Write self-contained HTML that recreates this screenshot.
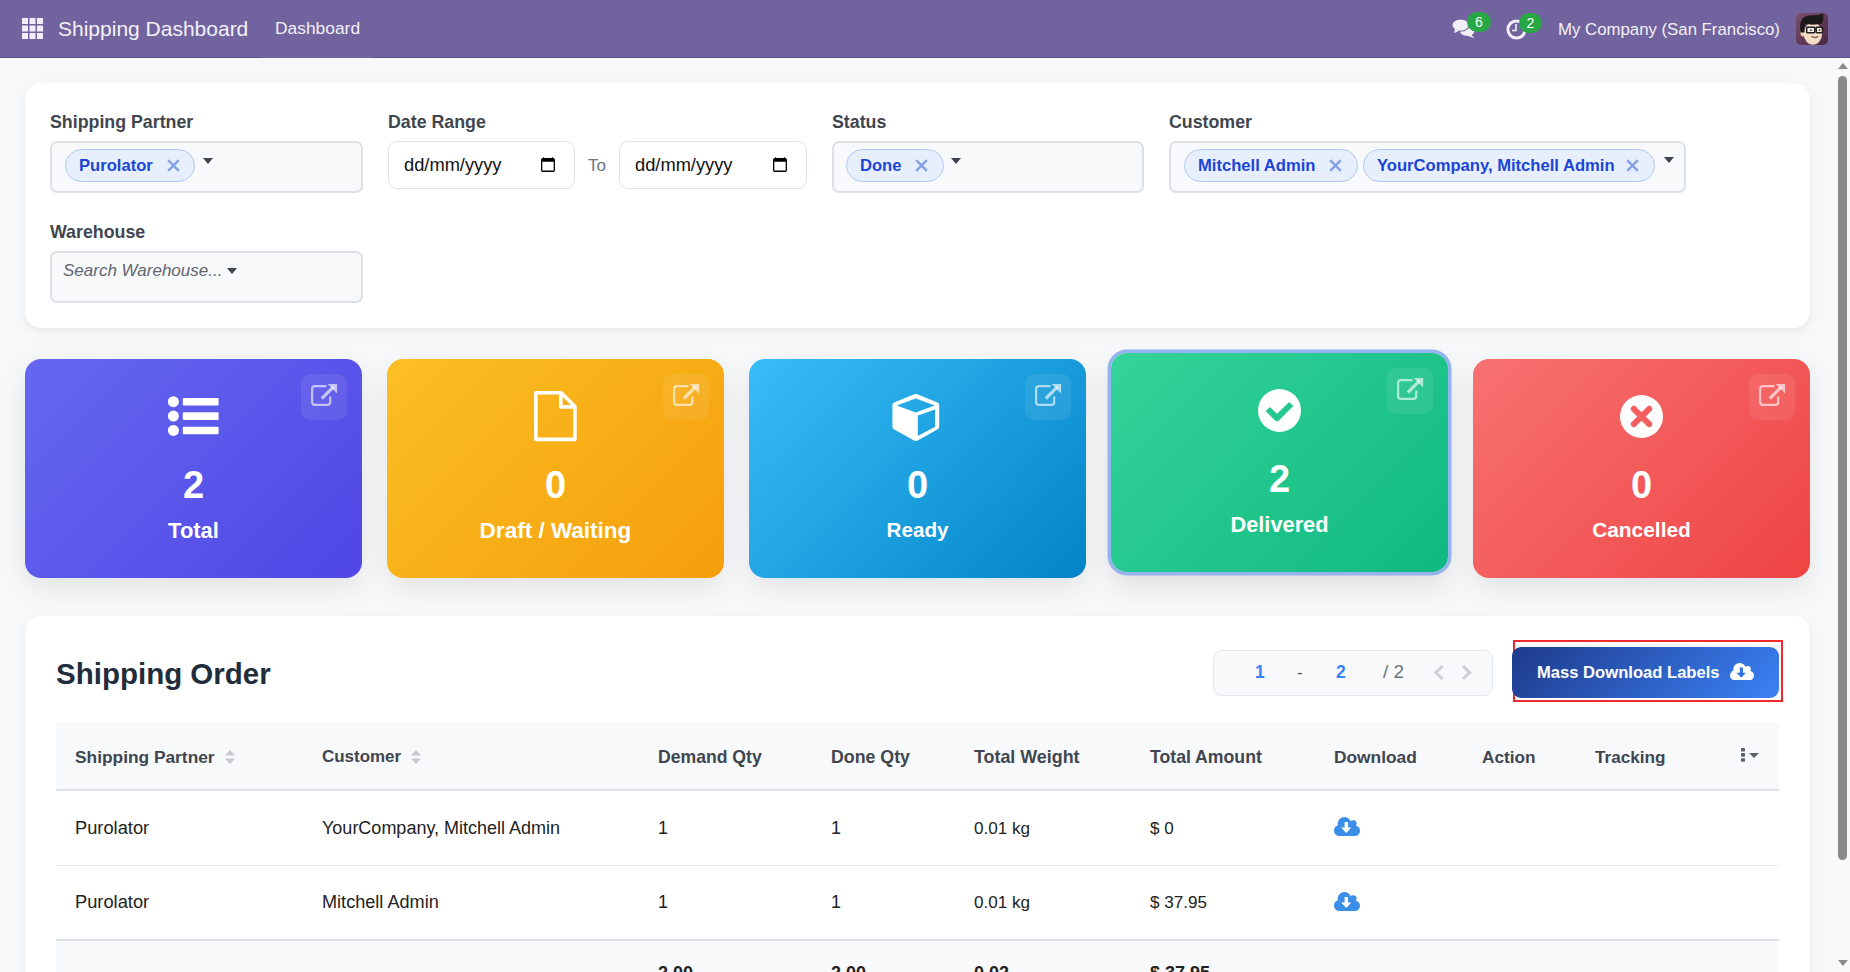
<!DOCTYPE html>
<html><head><meta charset="utf-8">
<style>
*{box-sizing:border-box;margin:0;padding:0}
html,body{width:1850px;height:972px;overflow:hidden}
body{font-family:"Liberation Sans",sans-serif;background:#f7f8fa;position:relative;color:#212529}
.abs{position:absolute}
.nav{position:absolute;left:0;top:0;width:1850px;height:58px;background:#71639e;border-bottom:1px solid #5f5289}
.nav .t{position:absolute;color:#f3f1f7;white-space:nowrap;line-height:1}
.card{position:absolute;background:#fff;border-radius:16px;box-shadow:0 2px 5px rgba(0,0,0,.045),0 4px 16px rgba(0,0,0,.04)}
.lbl{position:absolute;font-weight:700;color:#3f4650;font-size:17.8px;line-height:1;white-space:nowrap}
.sel{position:absolute;background:#f8f9fa;border:2px solid #dde1e5;border-radius:7px}
.tag{position:absolute;background:#e8effc;border:1px solid #b0c8f3;border-radius:17px;height:33px;top:149px}
.tag span{position:absolute;left:13px;top:8px;font-weight:700;color:#1c45d6;font-size:16.6px;line-height:1;white-space:nowrap}
.tag svg{position:absolute;top:10px}
.caret{position:absolute;width:0;height:0;border-left:5px solid transparent;border-right:5px solid transparent;border-top:6px solid #3d444d}
.date{position:absolute;background:#fff;border:1px solid #dde1e6;border-radius:9px;height:48px;top:141px}
.date span{position:absolute;left:15px;top:14px;font-size:18.3px;line-height:1;color:#111;white-space:nowrap}
.date svg{position:absolute;top:15px}
.stat{position:absolute;top:359px;width:337px;height:219px;border-radius:16px;color:#fff;box-shadow:0 10px 28px rgba(0,0,0,.085)}
.stat .num{position:absolute;left:0;right:0;top:107px;text-align:center;font-weight:700;font-size:38px;line-height:1}
.stat .nm{position:absolute;left:0;right:0;top:161px;text-align:center;font-weight:700;font-size:22px;line-height:1}
.stat .ico{position:absolute}
.ext{position:absolute;left:276px;top:15px;width:46px;height:46px;border-radius:9px;background:rgba(255,255,255,.08)}
.ext svg{position:absolute;left:0;top:0}
.th{position:absolute;top:748.5px;font-weight:700;color:#3f4650;font-size:17.3px;line-height:1;white-space:nowrap}
.td{position:absolute;font-size:18px;line-height:1;color:#222;white-space:nowrap}
</style></head><body>

<!-- NAVBAR -->
<div class="nav">
  <svg class="abs" style="left:22px;top:18px" width="21" height="21" viewBox="0 0 21 21" fill="#f1eef7"><rect x="0" y="0" width="6" height="6"/><rect x="7.5" y="0" width="6" height="6"/><rect x="15" y="0" width="6" height="6"/><rect x="0" y="7.5" width="6" height="6"/><rect x="7.5" y="7.5" width="6" height="6"/><rect x="15" y="7.5" width="6" height="6"/><rect x="0" y="15" width="6" height="6"/><rect x="7.5" y="15" width="6" height="6"/><rect x="15" y="15" width="6" height="6"/></svg>
  <div class="t" style="left:58px;top:18px;font-size:21px">Shipping Dashboard</div>
  <div class="abs" style="left:262px;top:57px;width:110px;height:1px;background:#71639e"></div>
  <div class="t" style="left:275px;top:20px;font-size:17.4px">Dashboard</div>
  <!-- chat icon -->
  <svg class="abs" style="left:1451px;top:18px" width="25" height="22" viewBox="-1 -1 25 22"><ellipse cx="15.2" cy="12" rx="7.3" ry="4.8" fill="#f1eef7"/><path d="M19 15 L22.2 19.2 L14.5 16.2Z" fill="#f1eef7"/><ellipse cx="8.6" cy="6.1" rx="8.7" ry="6.1" fill="#f1eef7" stroke="#71639e" stroke-width="1.1"/><path d="M3 9.5 L2.2 14.2 L7 11.8Z" fill="#f1eef7"/></svg>
  <div class="abs" style="left:1467px;top:12px;width:24px;height:20px;border-radius:10px;background:#28a745;color:#fff;font-size:14px;line-height:20px;text-align:center">6</div>
  <!-- clock -->
  <svg class="abs" style="left:1506px;top:19px" width="21" height="21" viewBox="0 0 21 21">
    <circle cx="10.5" cy="10.5" r="8.6" fill="none" stroke="#f1eef7" stroke-width="3"/>
    <path d="M10 5 V11.5 H6" fill="none" stroke="#f1eef7" stroke-width="1.6"/>
  </svg>
  <div class="abs" style="left:1519px;top:13px;width:23px;height:20px;border-radius:10px;background:#28a745;color:#fff;font-size:14px;line-height:20px;text-align:center">2</div>
  <div class="t" style="left:1558px;top:21.5px;font-size:16.8px">My Company (San Francisco)</div>
  <!-- avatar -->
  <div class="abs" style="left:1796px;top:13px;width:32px;height:32px;border-radius:5px;background:linear-gradient(135deg,#7b5070,#4b2742);overflow:hidden"><svg width="32" height="32" viewBox="0 0 32 32"><ellipse cx="6.8" cy="19.8" rx="2.3" ry="3.6" fill="#f3cfb0"/><ellipse cx="16.9" cy="20.8" rx="9.2" ry="11" fill="#f7dcc4"/><path d="M4.6 19.5 C3.2 12 4.5 5.5 9.5 3.4 C14 1.6 20.5 2.8 24.2 1.4 L27.2 0.4 C27.8 3 27.3 7 26.2 10.6 C21.5 11.9 14 11.9 9.6 11.1 C8.6 13.5 8.4 16 8.6 19.5 Z" fill="#1b1b1b"/><rect x="10.7" y="14.3" width="8" height="5.4" rx="0.6" fill="#fff" fill-opacity=".55" stroke="#1e1e1e" stroke-width="1.5"/><rect x="20.2" y="14.3" width="6.3" height="5.4" rx="0.6" fill="#fff" fill-opacity=".55" stroke="#1e1e1e" stroke-width="1.5"/><path d="M18.7 16.2H20.2" stroke="#1e1e1e" stroke-width="1.2"/><circle cx="15" cy="17.2" r="0.9" fill="#333"/><circle cx="23.5" cy="17.2" r="0.9" fill="#333"/><path d="M15.5 23.6 Q19 26.2 22.4 23.6 Q19 25 15.5 23.6Z" fill="#fff" stroke="#6b4a45" stroke-width="0.8"/></svg></div>
</div>

<!-- FILTER CARD -->
<div class="card" style="left:25px;top:83px;width:1785px;height:245px"></div>

<div class="lbl" style="left:50px;top:114px">Shipping Partner</div>
<div class="sel" style="left:50px;top:141px;width:313px;height:52px"></div>
<div class="tag" style="left:65px;width:130px"><span>Purolator</span>
  <svg style="left:101px;top:9px" width="13" height="13" viewBox="0 0 13 13"><path d="M1.2 1.2L11.8 11.8M11.8 1.2L1.2 11.8" stroke="#86a2e4" stroke-width="2.5"/></svg></div>
<div class="caret" style="left:203px;top:158px"></div>

<div class="lbl" style="left:388px;top:114px">Date Range</div>
<div class="date" style="left:388px;width:187px"><span>dd/mm/yyyy</span>
  <svg style="left:151px;top:14px" width="16" height="17" viewBox="0 0 16 17"><path fill="#000" fill-rule="evenodd" d="M2.8 2H13.2A1.8 1.8 0 0 1 15 3.8V14.2A1.8 1.8 0 0 1 13.2 16H2.8A1.8 1.8 0 0 1 1 14.2V3.8A1.8 1.8 0 0 1 2.8 2Z M2.3 5.8V14.6H13.7V5.8Z"/><path d="M3 2.2L3.7 0.7L4.5 2.2Z M11.6 2.2L12.3 0.7L13.1 2.2Z" fill="#000"/></svg></div>
<div class="abs" style="left:588px;top:157px;font-size:17px;color:#6c757d;line-height:1">To</div>
<div class="date" style="left:619px;width:188px"><span>dd/mm/yyyy</span>
  <svg style="left:152px;top:14px" width="16" height="17" viewBox="0 0 16 17"><path fill="#000" fill-rule="evenodd" d="M2.8 2H13.2A1.8 1.8 0 0 1 15 3.8V14.2A1.8 1.8 0 0 1 13.2 16H2.8A1.8 1.8 0 0 1 1 14.2V3.8A1.8 1.8 0 0 1 2.8 2Z M2.3 5.8V14.6H13.7V5.8Z"/><path d="M3 2.2L3.7 0.7L4.5 2.2Z M11.6 2.2L12.3 0.7L13.1 2.2Z" fill="#000"/></svg></div>

<div class="lbl" style="left:832px;top:114px">Status</div>
<div class="sel" style="left:832px;top:141px;width:312px;height:52px"></div>
<div class="tag" style="left:846px;width:98px"><span>Done</span>
  <svg style="left:68px;top:9px" width="13" height="13" viewBox="0 0 13 13"><path d="M1.2 1.2L11.8 11.8M11.8 1.2L1.2 11.8" stroke="#86a2e4" stroke-width="2.5"/></svg></div>
<div class="caret" style="left:951px;top:158px"></div>

<div class="lbl" style="left:1169px;top:114px">Customer</div>
<div class="sel" style="left:1169px;top:141px;width:517px;height:52px"></div>
<div class="tag" style="left:1184px;width:174px"><span>Mitchell Admin</span>
  <svg style="left:144px;top:9px" width="13" height="13" viewBox="0 0 13 13"><path d="M1.2 1.2L11.8 11.8M11.8 1.2L1.2 11.8" stroke="#86a2e4" stroke-width="2.5"/></svg></div>
<div class="tag" style="left:1363px;width:292px"><span>YourCompany, Mitchell Admin</span>
  <svg style="left:262px;top:9px" width="13" height="13" viewBox="0 0 13 13"><path d="M1.2 1.2L11.8 11.8M11.8 1.2L1.2 11.8" stroke="#86a2e4" stroke-width="2.5"/></svg></div>
<div class="caret" style="left:1664px;top:157px"></div>

<div class="lbl" style="left:50px;top:224px">Warehouse</div>
<div class="sel" style="left:50px;top:251px;width:313px;height:52px"></div>
<div class="abs" style="left:63px;top:262px;font-size:17px;font-style:italic;color:#5f666e;line-height:1;white-space:nowrap">Search Warehouse...</div>
<div class="caret" style="left:227px;top:268px"></div>

<!-- STAT CARDS -->
<div class="stat" style="left:25px;background:linear-gradient(135deg,#6568f1,#4f46e5)">
  <svg class="ico" style="left:143px;top:37px" width="52" height="42" viewBox="0 0 52 42" fill="#fff"><circle cx="5.4" cy="5.7" r="5.5"/><circle cx="5.4" cy="20.1" r="5.5"/><circle cx="5.4" cy="34.4" r="5.5"/><rect x="14.8" y="1.9" width="35.8" height="7.7" rx="1"/><rect x="14.8" y="16.3" width="35.8" height="7.7" rx="1"/><rect x="14.8" y="30.7" width="35.8" height="7.5" rx="1"/></svg>
  <div class="num">2</div><div class="nm" style="font-size:21.95px">Total</div>
  <div class="ext"><svg width="46" height="46" viewBox="0 0 46 46"><path d="M25.5 12.1H14a2.9 2.9 0 0 0-2.9 2.9V28a2.9 2.9 0 0 0 2.9 2.9H26.3a2.9 2.9 0 0 0 2.9-2.9V22.5" fill="none" stroke="rgba(255,255,255,.62)" stroke-width="2.2"/><path d="M20.8 24.5L32.5 12.8" stroke="rgba(255,255,255,.62)" stroke-width="3.2"/><path d="M26.6 9.9H36.1V19.4Z" fill="rgba(255,255,255,.62)"/></svg></div>
</div>

<div class="stat" style="left:387px;background:linear-gradient(135deg,#fbbf24,#f59e0b)">
  <svg class="ico" style="left:147px;top:32px" width="44" height="51" viewBox="0 0 44 51"><path d="M1.9 1.8H27.2L40.9 15.5V48.4H1.9Z" fill="none" stroke="#fff" stroke-width="3.6" stroke-linejoin="round"/><path d="M26.8 1.8V15.9H40.9" fill="none" stroke="#fff" stroke-width="3.6" stroke-linejoin="round"/></svg>
  <div class="num">0</div><div class="nm" style="font-size:22.52px">Draft / Waiting</div>
  <div class="ext"><svg width="46" height="46" viewBox="0 0 46 46"><path d="M25.5 12.1H14a2.9 2.9 0 0 0-2.9 2.9V28a2.9 2.9 0 0 0 2.9 2.9H26.3a2.9 2.9 0 0 0 2.9-2.9V22.5" fill="none" stroke="rgba(255,255,255,.62)" stroke-width="2.2"/><path d="M20.8 24.5L32.5 12.8" stroke="rgba(255,255,255,.62)" stroke-width="3.2"/><path d="M26.6 9.9H36.1V19.4Z" fill="rgba(255,255,255,.62)"/></svg></div>
</div>
<div class="stat" style="left:749px;background:linear-gradient(135deg,#38bdf8,#0284c7)">
  <svg class="ico" style="left:142px;top:34px" width="49" height="49" viewBox="-1 -1 49 49"><path fill="#fff" fill-rule="evenodd" d="M22.3 0.3 Q23.8 -0.3 25.3 0.3 L45.6 8.6 Q47.2 9.3 47.2 11 V32.8 Q47.2 34.4 45.8 35.2 L25.6 46.5 Q23.8 47.4 22 46.5 L1.8 35.2 Q0.4 34.4 0.4 32.8 V11 Q0.4 9.3 2 8.6 Z M4.7 11.4 L23.8 18.4 L42.8 11.4 L23.8 4.4 Z M25.8 21.4 V42.1 L43.1 32.8 V15.4 Z"/></svg>
  <div class="num">0</div><div class="nm" style="font-size:20.66px">Ready</div>
  <div class="ext"><svg width="46" height="46" viewBox="0 0 46 46"><path d="M25.5 12.1H14a2.9 2.9 0 0 0-2.9 2.9V28a2.9 2.9 0 0 0 2.9 2.9H26.3a2.9 2.9 0 0 0 2.9-2.9V22.5" fill="none" stroke="rgba(255,255,255,.62)" stroke-width="2.2"/><path d="M20.8 24.5L32.5 12.8" stroke="rgba(255,255,255,.62)" stroke-width="3.2"/><path d="M26.6 9.9H36.1V19.4Z" fill="rgba(255,255,255,.62)"/></svg></div>
</div>
<div class="stat" style="left:1111px;background:linear-gradient(135deg,#34d399,#10b981);transform:translateY(-6px);box-shadow:0 0 0 3.5px #95b4ef,0 14px 30px rgba(0,0,0,.11)">
  <svg class="ico" style="left:147px;top:36px" width="43" height="43" viewBox="0 0 43 43">
    <circle cx="21.5" cy="21.5" r="21.5" fill="#fff"/>
    <path d="M9.8 20L19 29.2L33.2 15" fill="none" stroke="#27c68e" stroke-width="6" stroke-linejoin="round"/>
  </svg>
  <div class="num">2</div><div class="nm" style="font-size:21.77px">Delivered</div>
  <div class="ext"><svg width="46" height="46" viewBox="0 0 46 46"><path d="M25.5 12.1H14a2.9 2.9 0 0 0-2.9 2.9V28a2.9 2.9 0 0 0 2.9 2.9H26.3a2.9 2.9 0 0 0 2.9-2.9V22.5" fill="none" stroke="rgba(255,255,255,.62)" stroke-width="2.2"/><path d="M20.8 24.5L32.5 12.8" stroke="rgba(255,255,255,.62)" stroke-width="3.2"/><path d="M26.6 9.9H36.1V19.4Z" fill="rgba(255,255,255,.62)"/></svg></div>
</div>
<div class="stat" style="left:1473px;background:linear-gradient(135deg,#f87171,#ef4444)">
  <svg class="ico" style="left:147px;top:36px" width="43" height="43" viewBox="0 0 43 43">
    <circle cx="21.5" cy="21.5" r="21.5" fill="#fff"/>
    <path d="M13.8 13.8L29.2 29.2M29.2 13.8L13.8 29.2" fill="none" stroke="#f35f5f" stroke-width="6" stroke-linecap="round"/>
  </svg>
  <div class="num">0</div><div class="nm" style="font-size:20.89px">Cancelled</div>
  <div class="ext"><svg width="46" height="46" viewBox="0 0 46 46"><path d="M25.5 12.1H14a2.9 2.9 0 0 0-2.9 2.9V28a2.9 2.9 0 0 0 2.9 2.9H26.3a2.9 2.9 0 0 0 2.9-2.9V22.5" fill="none" stroke="rgba(255,255,255,.62)" stroke-width="2.2"/><path d="M20.8 24.5L32.5 12.8" stroke="rgba(255,255,255,.62)" stroke-width="3.2"/><path d="M26.6 9.9H36.1V19.4Z" fill="rgba(255,255,255,.62)"/></svg></div>
</div>

<!-- TABLE CARD -->
<div class="card" style="left:25px;top:616px;width:1785px;height:420px"></div>
<div class="abs" style="left:56px;top:658.5px;font-size:29.5px;font-weight:700;color:#1f2d3d;line-height:1;white-space:nowrap">Shipping Order</div>
<!-- pager -->
<div class="abs" style="left:1213px;top:650px;width:280px;height:46px;border-radius:9px;background:#f8f9fa;border:1px solid #e3e6ea"></div>
<div class="abs" style="left:1255px;top:664px;font-size:17.5px;font-weight:700;color:#3b82f6;line-height:1">1</div>
<div class="abs" style="left:1297px;top:664px;font-size:17px;color:#555;line-height:1">-</div>
<div class="abs" style="left:1336px;top:664px;font-size:17.5px;font-weight:700;color:#3b82f6;line-height:1">2</div>
<div class="abs" style="left:1383px;top:663px;font-size:18.9px;color:#6c757d;line-height:1;white-space:nowrap">/ 2</div>
<svg class="abs" style="left:1432px;top:664px" width="42" height="17" viewBox="0 0 42 17"><path d="M10.5 2.2L3.8 8.5L10.5 14.8M31 2.2L37.7 8.5L31 14.8" fill="none" stroke="#cdd1d6" stroke-width="3"/></svg>
<!-- mass download button -->
<div class="abs" style="left:1513px;top:640px;width:270px;height:62px;border:2px solid #ee2a2f"></div>
<div class="abs" style="left:1512px;top:647px;width:267px;height:51px;border-radius:9px;background:linear-gradient(135deg,#1e3a8a,#3b82f6)"></div>
<div class="abs" style="left:1537px;top:665px;font-size:16.6px;font-weight:700;color:#fff;line-height:1;white-space:nowrap">Mass Download Labels</div>
<svg class="abs" style="left:1730px;top:662.5px" width="24" height="17.5" viewBox="0 0 26 19"><g fill="#fff"><circle cx="10.4" cy="6.8" r="6.8"/><circle cx="19.2" cy="6.6" r="3.4"/><circle cx="5.5" cy="13.5" r="5.5"/><circle cx="20.7" cy="13.7" r="5.3"/><rect x="5.5" y="8" width="15.2" height="11"/></g><path fill="#3474e0" d="M10.6 4.9H14V10.6H17.3L12.3 16L7 10.6H10.6Z"/></svg>
<!-- table header -->
<div class="abs" style="left:56px;top:723px;width:1723px;height:68px;background:#f8f9fa;border-bottom:2px solid #dde1e6"></div>
<div class="th" style="left:75px;font-size:17.34px">Shipping Partner</div>
<svg class="abs" style="left:225px;top:750px" width="10" height="14" viewBox="0 0 10 14" fill="#c5c9ce"><path d="M5 0L10 5.5H0Z M5 14L10 8.5H0Z"/></svg>
<div class="th" style="left:322px;font-size:16.97px">Customer</div>
<svg class="abs" style="left:411px;top:750px" width="10" height="14" viewBox="0 0 10 14" fill="#c5c9ce"><path d="M5 0L10 5.5H0Z M5 14L10 8.5H0Z"/></svg>
<div class="th" style="left:658px;font-size:17.61px">Demand Qty</div>
<div class="th" style="left:831px;font-size:17.77px">Done Qty</div>
<div class="th" style="left:974px;font-size:17.88px">Total Weight</div>
<div class="th" style="left:1150px;font-size:17.66px">Total Amount</div>
<div class="th" style="left:1334px;font-size:17.33px">Download</div>
<div class="th" style="left:1482px;font-size:17.2px">Action</div>
<div class="th" style="left:1595px;font-size:17.17px">Tracking</div>
<svg class="abs" style="left:1740px;top:748px" width="20" height="14" viewBox="0 0 20 14" fill="#5a626b"><rect x="1" y="0" width="4" height="3.6" rx=".8"/><rect x="1" y="5.1" width="4" height="3.6" rx=".8"/><rect x="1" y="10.2" width="4" height="3.6" rx=".8"/><path d="M9 5H19L14 10Z"/></svg>
<!-- rows -->
<div class="td" style="left:75px;top:819px;font-size:18.3px">Purolator</div>
<div class="td" style="left:322px;top:819px">YourCompany, Mitchell Admin</div>
<div class="td" style="left:658px;top:819px">1</div>
<div class="td" style="left:831px;top:819px">1</div>
<div class="td" style="left:974px;top:819.5px;font-size:17.1px">0.01 kg</div>
<div class="td" style="left:1150px;top:819.5px;font-size:17px">$ 0</div>
<svg class="abs" style="left:1334px;top:817px" width="26" height="19" viewBox="0 0 26 19"><g fill="#3a8ee8"><circle cx="10.4" cy="6.8" r="6.8"/><circle cx="19.2" cy="6.6" r="3.4"/><circle cx="5.5" cy="13.5" r="5.5"/><circle cx="20.7" cy="13.7" r="5.3"/><rect x="5.5" y="8" width="15.2" height="11"/></g><path fill="#fff" d="M10.6 4.9H14V10.6H17.3L12.3 16L7 10.6H10.6Z"/></svg>
<div class="abs" style="left:56px;top:865px;width:1723px;height:1px;background:#e9ecef"></div>
<div class="td" style="left:75px;top:893px;font-size:18.3px">Purolator</div>
<div class="td" style="left:322px;top:893px;font-size:18.13px">Mitchell Admin</div>
<div class="td" style="left:658px;top:893px">1</div>
<div class="td" style="left:831px;top:893px">1</div>
<div class="td" style="left:974px;top:893.5px;font-size:17.1px">0.01 kg</div>
<div class="td" style="left:1150px;top:893.5px;font-size:17.1px">$ 37.95</div>
<svg class="abs" style="left:1334px;top:892px" width="26" height="19" viewBox="0 0 26 19"><g fill="#3a8ee8"><circle cx="10.4" cy="6.8" r="6.8"/><circle cx="19.2" cy="6.6" r="3.4"/><circle cx="5.5" cy="13.5" r="5.5"/><circle cx="20.7" cy="13.7" r="5.3"/><rect x="5.5" y="8" width="15.2" height="11"/></g><path fill="#fff" d="M10.6 4.9H14V10.6H17.3L12.3 16L7 10.6H10.6Z"/></svg>
<div class="abs" style="left:56px;top:939px;width:1723px;height:40px;background:#f8f9fa;border-top:2px solid #dde1e6"></div>
<div class="td" style="left:658px;top:964px;font-weight:700">2.00</div>
<div class="td" style="left:831px;top:964px;font-weight:700">2.00</div>
<div class="td" style="left:974px;top:964px;font-weight:700">0.02</div>
<div class="td" style="left:1150px;top:964px;font-weight:700">$ 37.95</div>
<!-- scrollbar -->
<div class="abs" style="left:1835px;top:58px;width:15px;height:914px;background:#f8f9fa"></div>
<svg class="abs" style="left:1838px;top:63px" width="10" height="6" viewBox="0 0 10 6" fill="#8a8a8a"><path d="M5 0L10 6H0Z"/></svg>
<div class="abs" style="left:1838px;top:76px;width:9px;height:784px;border-radius:5px;background:#8a8a8a"></div>
<svg class="abs" style="left:1838px;top:960px" width="10" height="6" viewBox="0 0 10 6" fill="#8a8a8a"><path d="M0 0H10L5 6Z"/></svg>
</body></html>
